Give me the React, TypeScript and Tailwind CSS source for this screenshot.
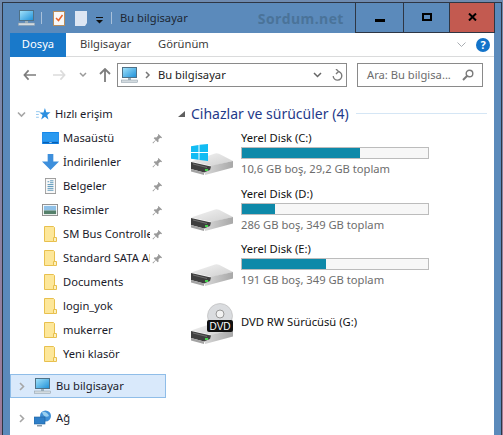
import React from "react";

const PC = ({ w = 17 }: { w?: number }) => (
  <svg width={w} height={(w * 16) / 17} viewBox="0 0 17 16" className="shrink-0">
    <defs>
      <linearGradient id="scr" x1="0" y1="0" x2="1" y2="1">
        <stop offset="0" stopColor="#a5e4fb" />
        <stop offset="1" stopColor="#1c8fd8" />
      </linearGradient>
    </defs>
    <rect x="1.5" y="0.5" width="14" height="10" fill="url(#scr)" stroke="#4f7187" />
    <rect x="7" y="11" width="3" height="2" fill="#9db0bc" />
    <rect x="0.3" y="13" width="16.400" height="2.400" fill="#d3dbe0" stroke="#8a9aa5" strokeWidth="0.500" />
  </svg>
);

const Pin = () => (
  <svg width="11" height="11" viewBox="0 0 12 12" className="shrink-0">
    <path d="M7 1l4 4-1 .6-1-.4-2 2 .2 2-1 .8-2-2-3 3.400-.7-.7L3.900 7.600l-2-2 .9-1 2 .2 2-2-.4-1z" fill="#9a9a9a" />
  </svg>
);

const Folder = () => (
  <svg width="13" height="16" viewBox="0 0 13 16" className="shrink-0">
    <path d="M.5.500h9l1 1v14h-10z" fill="#fde79a" stroke="#e8c04e" />
    <path d="M9.500 11.500h3v4h-3z" fill="#fdf0bd" stroke="#e8c04e" />
  </svg>
);

const Chevron = ({ down }: { down?: boolean }) => (
  <svg width="9" height="9" viewBox="0 0 9 9" className="shrink-0">
    <path d={down ? "M1 2.500l3.500 3.500L8 2.500" : "M3 1l3.500 3.500L3 8"} fill="none" stroke="#a6a6a6" strokeWidth="1.600" />
  </svg>
);

const Disk = () => (
  <svg width="44" height="24" viewBox="0 0 44 24" className="shrink-0 block">
    <defs>
      <linearGradient id="side" x1="0" y1="0" x2="1" y2="0">
        <stop offset="0" stopColor="#d8d8d8" />
        <stop offset="1" stopColor="#a8a8a8" />
      </linearGradient>
      <linearGradient id="top" x1="0" y1="0" x2="1" y2="1">
        <stop offset="0" stopColor="#f3f3f3" />
        <stop offset="1" stopColor="#cfcfcf" />
      </linearGradient>
    </defs>
    <path d="M1 9.500L25 1.500Q27 1 29 1.800L43 9 22 14z" fill="url(#top)" />
    <path d="M20 14L43 9V15.500L15 23 14 18z" fill="url(#side)" />
    <path d="M1 10L21 14.500 20 18 14 20.500 1 17z" fill="#3f3f3f" />
    <path d="M3 11.500L17 15 17 16 3 12.500z" fill="#707070" />
    <path d="M1 17L14 20.500V23L1 19.500z" fill="#a3a3a3" />
    <rect x="15" y="17" width="3" height="2" fill="#46d34e" />
  </svg>
);

const WinFlag = () => (
  <svg width="17" height="17" viewBox="0 0 17 17" className="absolute left-[1px] -top-[8px]">
    <path d="M0 2.200L7.500 1V8H0zM8.500.800L17 0V8H8.500zM0 9H7.500V15.800L0 14.800zM8.500 9H17V17L8.500 16z" fill="#12bcf3" />
  </svg>
);

const Row = ({ icon, label, pin, truncate }: { icon: React.ReactNode; label: string; pin?: boolean; truncate?: boolean }) => (
  <div className="flex items-center h-6 pl-[28px] pr-[3px]">
    <span className="w-[24px] flex justify-center shrink-0 mr-[1px]">{icon}</span>
    <span className={`text-[11.2px] text-[#1a1a2a] whitespace-nowrap ${truncate ? "overflow-hidden w-[87px]" : ""}`}>{label}</span>
    <span className="grow" />
    {pin && <Pin />}
  </div>
);

const Drive = ({ name, sub, pct, win }: { name: string; sub: string; pct: number; win?: boolean }) => (
  <div className="flex h-[55.5px] items-start">
    <div className="w-[63px] pl-[12px] pt-[22px] shrink-0">
      <div className="relative w-[44px]">
        <Disk />
        {win && <WinFlag />}
      </div>
    </div>
    <div className="w-[188px]">
      <div className="text-[11.2px] leading-[15px] text-[#111]">{name}</div>
      <div className="h-[12px] mt-[2px] border border-[#bcbcbc] bg-[#f7f7f7]">
        <div className="h-full bg-[#0e89a9]" style={{ width: `${pct}%` }} />
      </div>
      <div className="text-[11.2px] leading-[19px] text-[#6d6d6d] whitespace-nowrap">{sub}</div>
    </div>
  </div>
);

export default function App() {
  return (
    <div className="w-[503px] h-[435px] overflow-hidden pl-[2px] pt-[2px] bg-gradient-to-b from-[#6f8bb0] to-[#a07a98] font-['Noto_Sans','Open_Sans',sans-serif]">
      <div className="w-[500px] h-[433px] bg-[#5b8abb] border-l border-t border-r border-[#2e3644]">
        <div className="flex h-[30px]">
          <div className="flex items-center grow pl-[15px] min-w-0">
            <PC />
            <span className="ml-[6px] w-px h-[12px] bg-[#a9c1da]" />
            <svg width="12" height="16" viewBox="0 0 12 16" className="ml-[11px]">
              <rect x=".5" y="1.500" width="11" height="14" fill="#f8f8f8" stroke="#b78e5f" />
              <path d="M3 8l2.500 2.500L9.500 5" fill="none" stroke="#e8622a" strokeWidth="1.500" />
            </svg>
            <svg width="13" height="15" viewBox="0 0 13 15" className="ml-[10px]">
              <path d="M0 0h12v12l-2 3H0z" fill="#dde6f3" />
            </svg>
            <svg width="7" height="7" viewBox="0 0 7 7" className="ml-[8px] mt-[4px]">
              <rect y="0" width="7" height="1" fill="#111" />
              <path d="M0 3h7L3.500 6.500z" fill="#111" />
            </svg>
            <span className="ml-[8px] w-px h-[12px] bg-[#a9c1da]" />
            <span className="ml-[8px] text-[11.200px] text-[#1d2733]">Bu bilgisayar</span>
            <span className="ml-[70px] text-[14px] font-bold tracking-[0.4px] text-[#4a7399] font-['Open_Sans',sans-serif] whitespace-nowrap">Sordum.net</span>
          </div>
          <div className="flex h-[30px] mr-[6px] shrink-0 border-b border-l border-[#2e3644]">
            <div className="w-[48px] flex justify-center items-center border-r border-[#2e3644]">
              <span className="w-[10px] h-[3px] bg-black mt-[5px]" />
            </div>
            <div className="w-[46px] flex justify-center items-center border-r border-[#2e3644]">
              <span className="w-[10px] h-[8px] border-2 border-black mb-[1px]" />
            </div>
            <div className="w-[45px] flex justify-center items-center bg-[#c35a50] border-r border-[#2e3644]">
              <svg width="9" height="8" viewBox="0 0 9 8" className="mb-[1px]">
                <path d="M1 .5l7 7M8 .5l-7 7" stroke="#000" strokeWidth="2" />
              </svg>
            </div>
          </div>
        </div>

        <div className="ml-[7px] w-[484px] h-[402px] bg-white flex flex-col">
          <div className="flex items-center h-[24px] border-b border-[#dadbdc] shrink-0">
            <div className="w-[56px] h-[24px] bg-[#1979ca] text-white text-[11.2px] flex items-center justify-center">Dosya</div>
            <span className="ml-[14px] text-[11.2px] text-[#3b3b3b]">Bilgisayar</span>
            <span className="ml-[27px] text-[11.2px] text-[#3b3b3b]">Görünüm</span>
            <span className="grow" />
            <svg width="9" height="6" viewBox="0 0 9 6" className="mr-[10px]">
              <path d="M.5.500l4 4 4-4" fill="none" stroke="#a9adb2" />
            </svg>
            <span className="w-[14px] h-[14px] mr-[4px] rounded-full bg-[#1373c9] text-white text-[11px] font-bold leading-[14px] text-center">?</span>
          </div>

          <div className="flex items-center h-[36px] shrink-0">
            <svg width="13" height="12" viewBox="0 0 14 12" className="ml-[13px]">
              <path d="M6 1L1.500 6 6 11M2 6h12" fill="none" stroke="#7d7d7d" strokeWidth="1.800" />
            </svg>
            <svg width="13" height="12" viewBox="0 0 14 12" className="ml-[17px]">
              <path d="M8 1l4.500 5L8 11M12 6H0" fill="none" stroke="#dcdcdc" strokeWidth="1.800" />
            </svg>
            <svg width="8" height="6" viewBox="0 0 8 6" className="ml-[13px]">
              <path d="M1 1l3 3 3-3" fill="none" stroke="#9a9a9a" strokeWidth="1.500" />
            </svg>
            <svg width="12" height="14" viewBox="0 0 12 14" className="ml-[12px]">
              <path d="M1 6l5-5 5 5M6 1.500V14" fill="none" stroke="#7d7d7d" strokeWidth="1.800" />
            </svg>
            <div className="ml-[6px] w-[230px] h-[24px] border border-[#8a8a8a] flex items-center">
              <span className="ml-[3px]"><PC /></span>
              <svg width="6" height="8" viewBox="0 0 6 8" className="ml-[7px]">
                <path d="M1 1l3 3-3 3" fill="none" stroke="#777" strokeWidth="1.500" />
              </svg>
              <span className="ml-[7px] text-[11.2px] text-[#222]">Bu bilgisayar</span>
              <span className="grow" />
              <svg width="9" height="6" viewBox="0 0 9 6">
                <path d="M1 1l3.500 3.500L8 1" fill="none" stroke="#666" strokeWidth="1.500" />
              </svg>
              <svg width="11" height="13" viewBox="0 0 11 13" className="ml-[10px] mr-[3px]">
                <path d="M5.500 2.500a4.300 4.300 0 1 1-4.300 4.600M4 0l2.500 2.500L4 5" fill="none" stroke="#7a7a7a" strokeWidth="1.400" />
              </svg>
            </div>
            <div className="ml-[10px] w-[126px] h-[24px] border border-[#8a8a8a] flex items-center pl-[9px]">
              <span className="text-[11.2px] text-[#6d6d6d] whitespace-nowrap">Ara: Bu bilgisa...</span>
              <span className="grow" />
              <svg width="12" height="12" viewBox="0 0 12 12" className="mr-[8px]">
                <circle cx="7.500" cy="4.500" r="3.300" fill="none" stroke="#7a7a7a" strokeWidth="1.400" />
                <path d="M5 7l-4 4" stroke="#7a7a7a" strokeWidth="2" />
              </svg>
            </div>
          </div>

          <div className="flex grow min-h-0">
            <div className="w-[156px] shrink-0 pt-[9px]">
              <div className="flex items-center h-6 pl-[7px]">
                <Chevron down />
                <svg width="15" height="14" viewBox="0 0 16 15" className="ml-[10px]">
                  <path d="M9.500 1l1.500 4.500h4.500L12 8.500l1.300 5-3.800-3-4 3 1.500-5L3.500 6h4.500z" fill="#2b8fe0" />
                  <path d="M0 5h4M0 8h3M0 11h3" stroke="#8cc4ee" strokeWidth="1" />
                </svg>
                <span className="ml-[4px] text-[11.2px] text-[#1a1a2a]">Hızlı erişim</span>
              </div>
              <Row pin label="Masaüstü" icon={
                <svg width="17" height="12" viewBox="0 0 21 15"><rect width="21" height="15" fill="#1182e8" /><rect x="1" y="1" width="19" height="11" fill="#2b9af0" /><rect x="1" y="12.500" width="19" height="1.500" fill="#0a5fb0" /><rect x="9" y="12.800" width="3" height="1" fill="#cde6fb" /></svg>
              } />
              <Row pin label="İndirilenler" icon={
                <svg width="17" height="16" viewBox="0 0 21 17" preserveAspectRatio="none"><path d="M7 0h7v8h7l-10.500 9L0 8h7z" fill="#3d8fdc" /></svg>
              } />
              <Row pin label="Belgeler" icon={
                <svg width="11" height="16" viewBox="0 0 13 17" preserveAspectRatio="none"><rect x=".5" y=".5" width="12" height="16" fill="#f8f8f8" stroke="#9a9a9a" /><path d="M3 4h2M6 3h4M6 5h4M3 7h7M3 9h7M3 11h7M3 13h7" stroke="#4c8fb5" strokeWidth="1" /></svg>
              } />
              <Row pin label="Resimler" icon={
                <svg width="16" height="12" viewBox="0 0 17 13" preserveAspectRatio="none"><rect x=".5" y=".5" width="16" height="12" fill="#fff" stroke="#8c8c8c" /><rect x="2" y="2" width="13" height="5" fill="#8fc1e8" /><rect x="2" y="7" width="13" height="4" fill="#55806b" /></svg>
              } />
              <Row pin truncate label="SM Bus Controller" icon={<Folder />} />
              <Row pin truncate label="Standard SATA AHCI" icon={<Folder />} />
              <Row label="Documents" icon={<Folder />} />
              <Row label="login_yok" icon={<Folder />} />
              <Row label="mukerrer" icon={<Folder />} />
              <Row label="Yeni klasör" icon={<Folder />} />

              <div className="flex items-center h-[24px] mt-[8px] bg-[#d9e9fb] border border-[#8fbde8] pl-[6px]">
                <Chevron />
                <span className="ml-[8px]"><PC /></span>
                <span className="ml-[5px] text-[11.2px] text-[#1a1a2a]">Bu bilgisayar</span>
              </div>
              <div className="flex items-center h-6 mt-[8px] pl-[7px]">
                <Chevron />
                <svg width="17" height="17" viewBox="0 0 17 17" className="ml-[8px]">
                  <circle cx="11.500" cy="6" r="5.500" fill="#3f8fd6" />
                  <path d="M8 2c3-1 6 1 7 4-3 2-6 0-7-4z" fill="#9ad0f0" />
                  <rect x="0" y="7" width="11" height="7" fill="#2f7fc8" stroke="#1d5f9a" strokeWidth=".6" />
                  <rect x="3" y="15" width="5" height="1.500" fill="#8a9aa5" />
                </svg>
                <span className="ml-[5px] text-[11.2px] text-[#1a1a2a]">Ağ</span>
              </div>
            </div>

            <div className="grow pl-[12px] pt-[9px]">
              <div className="flex items-center h-[22px]">
                <svg width="7" height="7" viewBox="0 0 7 7" className="mr-[6px]"><path d="M7 1v6H0z" fill="#5f5f5f" /></svg>
                <span className="text-[14px] text-[#1f3a8a] whitespace-nowrap">Cihazlar ve sürücüler (4)</span>
                <span className="ml-[7px] mr-[7px] grow h-px bg-[#d5e6f5]" />
              </div>
              <div className="mt-[6px]">
                <Drive win name="Yerel Disk (C:)" sub="10,6 GB boş, 29,2 GB toplam" pct={63.6} />
                <Drive name="Yerel Disk (D:)" sub="286 GB boş, 349 GB toplam" pct={18} />
                <Drive name="Yerel Disk (E:)" sub="191 GB boş, 349 GB toplam" pct={45} />
                <div className="flex items-start">
                  <div className="w-[63px] shrink-0 relative h-[48px]">
                    <div className="absolute left-[12px] top-[24px]"><Disk /></div>
                    <svg width="26" height="29" viewBox="0 0 26 29" className="absolute left-[29px] top-[6px]">
                      <circle cx="13" cy="13" r="12.500" fill="#dadcdf" stroke="#aaa" strokeWidth=".5" />
                      <circle cx="13" cy="11" r="4" fill="#f2f2f2" stroke="#999" />
                      <rect x="0" y="17" width="26" height="12" rx="2" fill="#111" />
                      <text x="13" y="26.500" textAnchor="middle" fontSize="10" fill="#fff" fontFamily="Liberation Sans">DVD</text>
                    </svg>
                  </div>
                  <span className="mt-[17px] text-[11.2px] leading-[15px] text-[#111] whitespace-nowrap">DVD RW Sürücüsü (G:)</span>
                </div>
              </div>
            </div>
          </div>
        </div>
      </div>
    </div>
  );
}
